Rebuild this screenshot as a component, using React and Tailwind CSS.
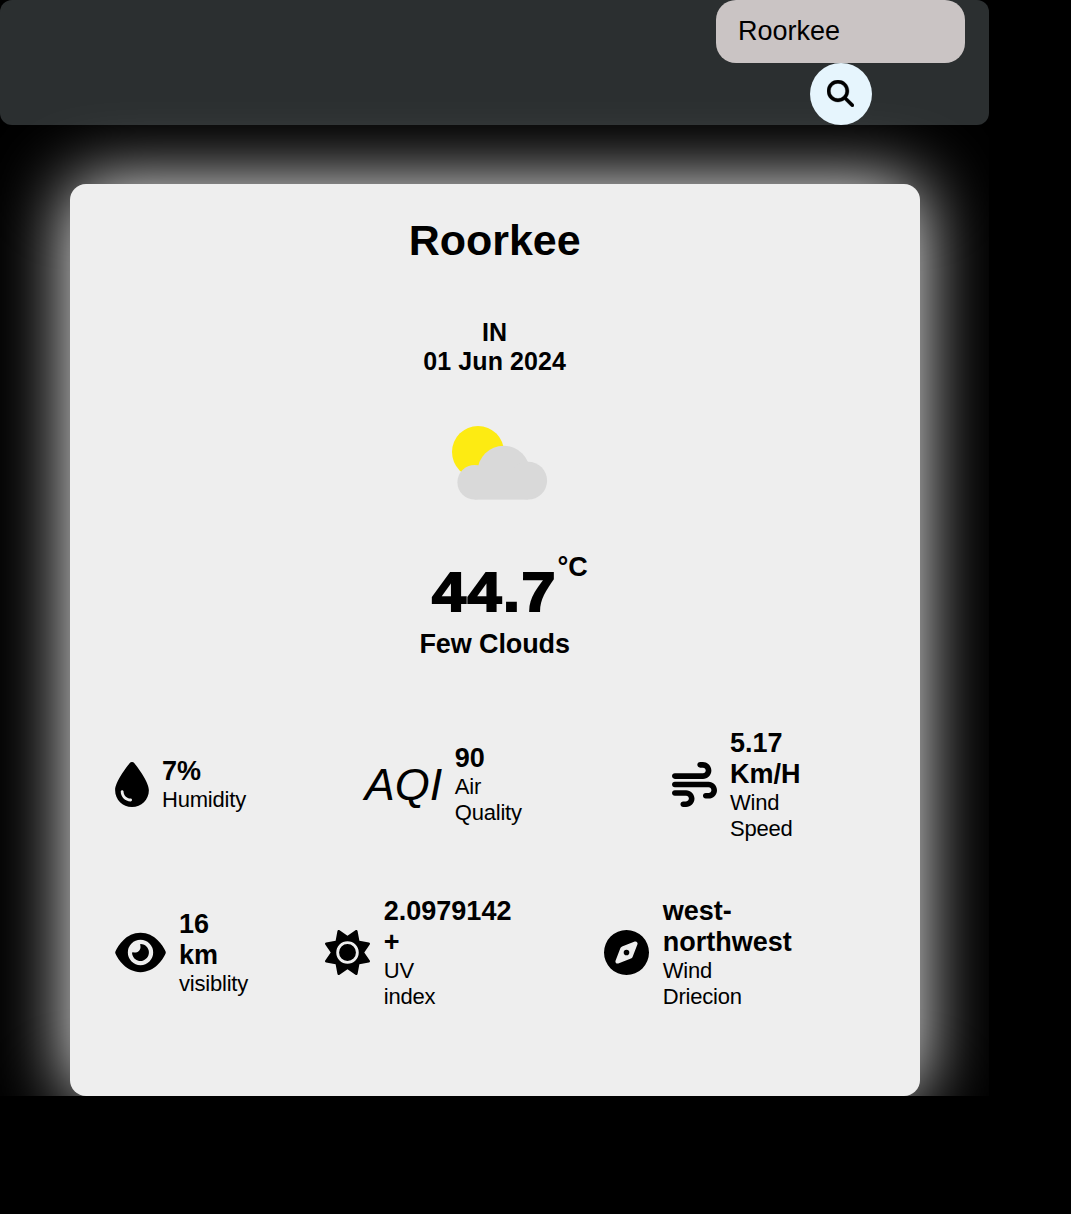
import React from "react";
import { FaDroplet, FaEye, FaWind, FaSun, FaCompass, FaMagnifyingGlass } from "react-icons/fa6";

function Detail({ icon, value, label, className }) {
  return (
    <div className={`flex shrink-0 items-center gap-[13.3px] ${className}`}>
      <div className="pb-[0.5px]">{icon}</div>
      <div>
        {value.map((line) => (
          <p key={line} className="h-[31px] whitespace-nowrap text-[27px] font-bold leading-[31px]">{line}</p>
        ))}
        {label.map((line) => (
          <p key={line} className="h-[26px] whitespace-nowrap text-[22px] leading-[26px] tracking-[-0.2px]">{line}</p>
        ))}
      </div>
    </div>
  );
}

function FewClouds() {
  return (
    <svg className="mt-[49px] h-[76px] w-[100px]" viewBox="450 425 100 76">
      <circle cx="478" cy="452" r="26" fill="#fdeb12" />
      <g fill="#d9d9d9">
        <circle cx="474.7" cy="482.3" r="17.3" />
        <circle cx="503.7" cy="472" r="26.3" />
        <circle cx="528.2" cy="480.7" r="18.9" />
        <rect x="474.7" y="470" width="53.5" height="29.6" />
      </g>
    </svg>
  );
}

export default function App() {
  return (
    <div className="h-[1214px] w-full overflow-hidden bg-black font-['Liberation_Sans',Arial,sans-serif] text-black">
      <div className="h-[1096px] w-[989px] overflow-hidden">
        <header className="relative z-10 flex h-[125px] justify-end rounded-[12px] bg-[#565e60]/50 pr-6">
          <div className="flex w-[249px] flex-col items-center">
            <input
              className="h-[63px] w-full rounded-[20px] bg-[#cac4c4] px-[22px] text-[27px] outline-none"
              defaultValue="Roorkee"
            />
            <button className="flex size-[62px] items-center justify-center rounded-full bg-[#e6f5fd]">
              <FaMagnifyingGlass className="mb-[2px] size-[27px] stroke-black stroke-[6px]" />
            </button>
          </div>
        </header>
        <main className="ml-[69.7px] mt-[59px] h-[912px] w-[850px] rounded-[16px] bg-[#eee] pt-[31px] shadow-[0_0_75px_#fff]">
          <div className="flex flex-col items-center">
            <h1 className="text-[43px] font-bold leading-[50px]">Roorkee</h1>
            <div className="mt-[53px] text-center text-[25px] font-bold leading-[29px] tracking-[0.1px]">
              <p>IN</p>
              <p>01 Jun 2024</p>
            </div>
            <div className="pl-[10px]"><FewClouds /></div>
            <div className="mt-[51px] flex h-[77px] items-start pl-[30px]">
              <span className="mt-[8px] w-[126px] origin-left scale-x-[1.09] text-[56px] font-bold leading-[64px] tracking-[1.4px] [-webkit-text-stroke:2px_black]">44.7</span>
              <span className="text-[27px] font-bold leading-[31px]">°C</span>
            </div>
            <p className="text-[27px] font-bold leading-[31px] tracking-[-0.1px]">Few Clouds</p>
          </div>
          <div className="ml-[45px] mt-[67.5px] flex h-[114px] items-center">
            <Detail className="w-[250px]" icon={<FaDroplet className="h-[45px] w-[34px]" />} value={["7%"]} label={["Humidity"]} />
            <Detail className="w-[307px]" icon={<i className="-mr-[0.8px] block pt-[1px] text-[45px] leading-[50px]">AQI</i>} value={["90"]} label={["Air", "Quality"]} />
            <Detail className="w-[180px]" icon={<FaWind className="size-[45px]" />} value={["5.17", "Km/H"]} label={["Wind", "Speed"]} />
          </div>
          <div className="ml-[45px] mt-[54px] flex h-[114px] items-center">
            <Detail className="w-[210.8px]" icon={<FaEye className="h-[45px] w-[51px]" />} value={["16", "km"]} label={["visiblity"]} />
            <Detail className="w-[279px]" icon={<FaSun className="size-[45px]" />} value={["2.0979142", "+"]} label={["UV", "index"]} />
            <Detail className="w-[200px]" icon={<FaCompass className="size-[45px]" />} value={["west-", "northwest"]} label={["Wind", "Driecion"]} />
          </div>
        </main>
      </div>
    </div>
  );
}
